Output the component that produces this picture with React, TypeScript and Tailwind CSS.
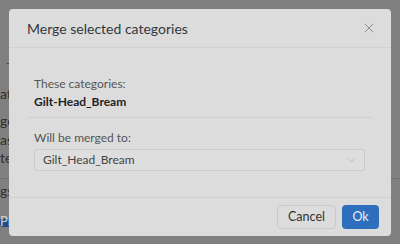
import { ChevronDown, X } from "lucide-react";

const font = { fontFamily: 'Lato, "Open Sans", sans-serif' };

function BackgroundPage() {
  return (
    <div className="flex h-full flex-col bg-[#808080] text-[14px] text-[#2e2e2e]">
      <div className="h-[56px]" />
      <div className="pl-[6px] text-[10px] leading-[12px]">-</div>
      <div className="mt-[18px] leading-[16px]">at</div>
      <div className="mt-[11px] leading-[16px]">ge</div>
      <div className="mt-[3px] leading-[16px]">as</div>
      <div className="mt-[2px] leading-[16px]">te</div>
      <div className="mt-[12px] border-t border-[#6e6e6e]" />
      <div className="mt-[4px] leading-[16px]">gs</div>
      <div className="mt-[20px] flex gap-[5px]">
        <div className="h-[8px] w-[61px] rounded-b-[3px] bg-[#234c80] text-[13px] leading-[4px] text-[#c9d3e0]">
          Pr
        </div>
        <div className="h-[8px] w-[162px] rounded-b-[3px] bg-[#234c80]" />
        <div className="h-[8px] w-[146px] rounded-b-[3px] bg-[#234c80]" />
      </div>
    </div>
  );
}

function MergeDialog() {
  return (
    <div className="absolute left-[9px] top-[9px] flex h-[227px] w-[382px] flex-col rounded-[4px] bg-[#dcdcdc]">
      <div className="flex h-[39px] shrink-0 items-center justify-between border-b border-[#d0d0d0] pl-[18px] pr-[14px]">
        <h2 className="text-[14px] text-[#33383e]">Merge selected categories</h2>
        <X size={16} strokeWidth={1.25} className="text-[#808080]" />
      </div>

      <div className="flex-1 px-[19px] pt-[27px]">
        <div className="px-[6px] text-[12px] leading-[18px]">
          <p className="text-[#555]">These categories:</p>
          <p className="font-bold text-[#222]">Gilt-Head_Bream</p>
        </div>
        <div className="mt-[6px] border-t border-[#cfcfcf]" />
        <div className="px-[6px] pt-[11px] text-[12px] leading-[18px]">
          <p className="text-[#555]">Will be merged to:</p>
          <div className="mt-[2px] flex h-[22px] w-[331px] items-center justify-between rounded-[3px] border border-[#cbcbcb] bg-[#dedede] pl-[8px] pr-[7px]">
            <span className="text-[#444]">Gilt_Head_Bream</span>
            <ChevronDown size={11} strokeWidth={1.25} className="text-[#a0a0a0]" />
          </div>
        </div>
      </div>

      <div className="flex h-[39px] shrink-0 items-center justify-end gap-[6px] border-t border-[#d0d0d0] pr-[12px]">
        <button className="h-[24px] w-[59px] rounded-[4px] border border-[#c9c9c9] bg-[#dcdcdc] text-[12.5px] text-[#333]">
          Cancel
        </button>
        <button className="h-[24px] w-[37px] rounded-[4px] bg-[#2e6fbd] text-[12.5px] text-[#e8eef6]">
          Ok
        </button>
      </div>
    </div>
  );
}

export default function App() {
  return (
    <div className="relative h-[244px] w-[400px] overflow-hidden" style={font}>
      <BackgroundPage />
      <MergeDialog />
    </div>
  );
}
